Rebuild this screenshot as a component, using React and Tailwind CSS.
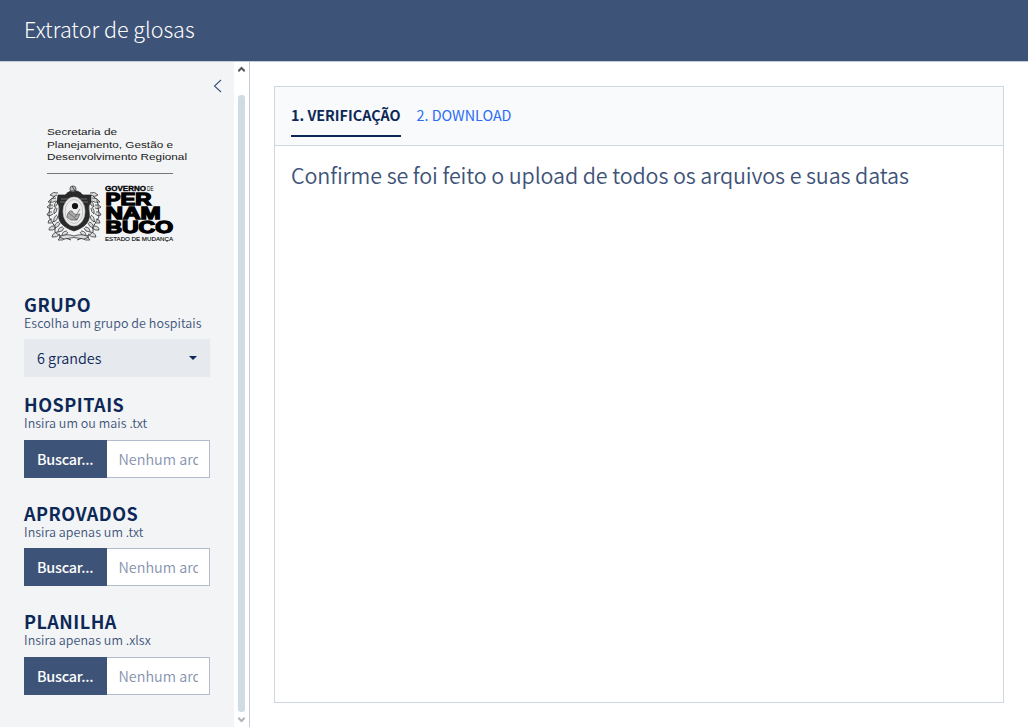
const cjk = "font-['Noto_Sans_CJK_SC','Noto_Sans_CJK_JP',sans-serif]";

function Branch() {
  return (
    <g>
      <path d="M8 11q-5 3-5 8t-1 9 3 9 3 8 6 6 10 4" stroke="#444" strokeWidth="1" />
      <path d="M11 8q-5-2-8 2 4 3 7 0M9 13q-5-1-8 4 5 1 8-1M11 15q-4 3-4 7 4-1 4-6M6 20q-4-1-6 2 3 3 6 1M9 22q-3 3-2 7 3-2 3-6M5 27q-4-1-5 3 3 2 6-1M10 30q-4 2-3 7 4-2 4-6M5 34q-4 0-4 4 4 1 6-2M12 37q-5 1-4 6 4-1 5-5M7 41q-5 0-5 4 4 1 7-2M16 42q-5 0-5 5 5 0 6-4M11 47q-5 0-6 5 5 1 8-3M20 46q-5 0-5 5 5 0 6-4M17 51q-4 0-6 4 5 1 8-2" stroke="#333" strokeWidth="0.75" fill="#aaa" fillOpacity="0.35" />
    </g>
  );
}

function Crest() {
  return (
    <g fill="none" stroke="#222" strokeWidth="0.7">
      <Branch />
      <g transform="translate(54 0) scale(-1 1)"><Branch /></g>
      <path d="M11 10h7q4-4 9-4t9 4h8v7q-3 3-2 9c2 10-3 16-15 20C15 42 10 36 12 27q1-7-2-10z" fill="#2a2a2a" stroke="#222" />
      <path d="M14 14h8M32 14h8M13 17h5M36 17h5" stroke="#888" />
      <ellipse cx="27" cy="26.5" rx="11" ry="14.5" fill="#ededee" stroke="#bbb" />
      <ellipse cx="27" cy="26.5" rx="8.8" ry="12" stroke="#999" strokeWidth="0.5" />
      <circle cx="28" cy="21" r="3.1" fill="#111" stroke="none" />
      <path d="M20 32q1-7 5-6 2 5 8 3l-3 6h-6zM22 28l8 7M33 24l-5 8" stroke="#555" fill="#aaa" />
      <circle cx="26" cy="4" r="3.1" fill="#bbb" stroke="#333" />
      <path d="M20 8l4-2h6l4 2M25 1l3 5" stroke="#222" />
      <path d="M12 52q7-4 15-1 8-3 15 1l-5 2q-10-3-20 0z" fill="#ddd" />
    </g>
  );
}

function Logo() {
  return (
    <svg width="142" height="120" viewBox="46 124 142 120" className="block" fontFamily="'Liberation Sans', Arial, sans-serif" fill="#1b1b1b">
      <g fontSize="9.6">
        <text x="47" y="134.6" textLength="70" lengthAdjust="spacingAndGlyphs">Secretaria de</text>
        <text x="47" y="147.5" textLength="126" lengthAdjust="spacingAndGlyphs">Planejamento, Gestão e</text>
        <text x="47" y="160.4" textLength="140" lengthAdjust="spacingAndGlyphs">Desenvolvimento Regional</text>
      </g>
      <rect x="47" y="173" width="126" height="1" fill="#777" />
      <g transform="translate(47 185)"><Crest /></g>
      <g fill="#000" stroke="#000" fontWeight="bold">
        <text x="105" y="191" fontSize="6.5" strokeWidth="0.3" textLength="41" lengthAdjust="spacingAndGlyphs">GOVERNO</text>
        <text x="147" y="191" fontSize="6.5" fontWeight="normal" stroke="none" textLength="6.5" lengthAdjust="spacingAndGlyphs">DE</text>
        <g fontSize="16" strokeWidth="1.3">
          <text x="105.5" y="205.3" textLength="46" lengthAdjust="spacingAndGlyphs">PER</text>
          <text x="105.5" y="219.3" textLength="55" lengthAdjust="spacingAndGlyphs">NAM</text>
          <text x="105.5" y="233.3" textLength="67.5" lengthAdjust="spacingAndGlyphs">BUCO</text>
        </g>
        <text x="105" y="241.3" fontSize="5.6" fontWeight="normal" strokeWidth="0.1" textLength="68" lengthAdjust="spacingAndGlyphs">ESTADO DE MUDANÇA</text>
      </g>
    </svg>
  );
}

function FieldLabel({ title, hint }) {
  return (
    <div className="whitespace-nowrap">
      <div className="h-[22px] text-[18px] leading-[20px] font-bold tracking-[0.5px] text-[#0c2856]">{title}</div>
      <div className="h-[15px] text-[12.5px] leading-[13px] font-[350] tracking-[0.05px] text-[#3e5378]">{hint}</div>
    </div>
  );
}

function FileInput() {
  return (
    <div className="flex h-[38px] text-[14.4px] leading-[38px]">
      <button type="button" className="w-[83px] shrink-0 bg-[#3e5378] pl-[13px] text-left font-medium tracking-[-0.25px] text-white">Buscar...</button>
      <div className="min-w-0 flex-1 border border-l-0 border-[#b3bccb] bg-white pr-3 pl-[11.5px] leading-[36px] text-[#8592ad]">
        <div className="w-[79px] overflow-hidden font-[350] whitespace-nowrap">Nenhum arquivo</div>
      </div>
    </div>
  );
}

export default function App() {
  return (
    <div className={`flex h-[727px] w-[1028px] flex-col overflow-hidden bg-white ${cjk}`}>
      <header className="h-[62px] border-b border-[#c3cbd9] bg-[#3e5378] px-6 text-[21.5px] leading-[58px] font-light text-white">Extrator de glosas</header>
      <div className="flex min-h-0 flex-1">
        <aside className="flex w-[234px] flex-col bg-[#f2f4f6] px-6">
          <div className="-mr-3 flex h-[62px] justify-end pt-[17px]">
            <svg width="9" height="15" viewBox="0 0 9 15" fill="none" stroke="#3e5378" strokeWidth="1.1"><path d="M8 1 1.5 7 8 13" /></svg>
          </div>
          <div className="ml-[22px] h-[170px]"><Logo /></div>
          <section className="h-[100px]">
            <FieldLabel title="GRUPO" hint="Escolha um grupo de hospitais" />
            <div className="mt-2 flex h-[38px] items-center justify-between bg-[#e6e9ee] pr-[13px] pl-[13px] text-[14.4px] text-[#0c2856]">
              <span className="font-[350]">6 grandes</span>
              <svg width="8" height="4" viewBox="0 0 8 4" fill="#0c2856"><path d="M0 0h8L4 4z" /></svg>
            </div>
          </section>
          <section className="h-[109px]">
            <FieldLabel title="HOSPITAIS" hint="Insira um ou mais .txt" />
            <div className="mt-[9px]"><FileInput /></div>
          </section>
          <section className="h-[108px]">
            <FieldLabel title="APROVADOS" hint="Insira apenas um .txt" />
            <div className="mt-2"><FileInput /></div>
          </section>
          <section>
            <FieldLabel title="PLANILHA" hint="Insira apenas um .xlsx" />
            <div className="mt-[9px]"><FileInput /></div>
          </section>
        </aside>
        <div className="flex w-4 flex-col items-center border-r border-[#c3cbd9] pt-1">
          <svg width="7" height="7" viewBox="0 0 7 7" fill="none" stroke="#555" strokeWidth="2"><path d="M0.3 5.2 3.5 2 6.7 5.2" /></svg>
          <div className="mt-[22px] h-[617px] w-[7px] rounded-[3px] bg-[#d0dbe4]" />
          <svg className="mt-1" width="7" height="7" viewBox="0 0 7 7" fill="none" stroke="#b5b5b5" strokeWidth="2"><path d="M0.3 1.8 3.5 5 6.7 1.8" /></svg>
        </div>
        <main className="flex-1 p-6">
          <div className="h-[617px] border border-[#d1d7e0]">
            <nav className="flex h-[59px] gap-4 border-b border-[#d1d7e0] bg-[#f9fafc] px-4 pt-[9px] text-[14.35px] leading-[37px] whitespace-nowrap">
              <div className="h-[41px] w-[110px] border-b-2 border-[#0c2856] font-bold text-[#0c2856]">1. VERIFICAÇÃO</div>
              <div className="-ml-[0.5px] text-[#2b6cf6]">2. DOWNLOAD</div>
            </nav>
            <h1 className="px-4 pt-[14px] text-[21.5px] leading-[30px] font-[350] tracking-[-0.12px] whitespace-nowrap text-[#3e5378]">Confirme se foi feito o upload de todos os arquivos e suas datas</h1>
          </div>
        </main>
      </div>
    </div>
  );
}
